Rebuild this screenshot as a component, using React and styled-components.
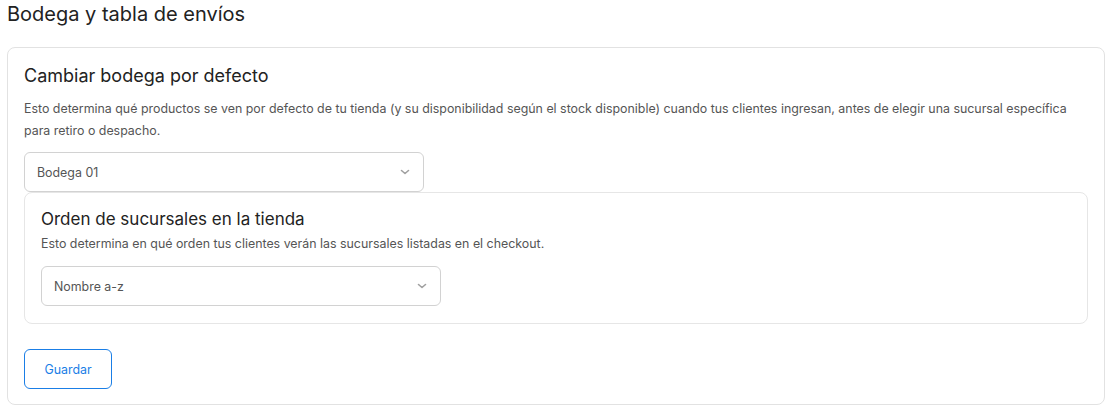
import React from 'react';
import styled, { createGlobalStyle } from 'styled-components';

const GlobalStyle = createGlobalStyle`
	body {
		margin: 0;
		background: #fff;
		font-family: Inter, "Noto Sans", sans-serif;
		color: #222;
	}
`;

const Page = styled.div`
		padding: 0 9px 0 7px;
	`,
	Title = styled.h1`
		margin: 0 0 19px;
		font-size: 20px;
		line-height: 28px;
		font-weight: 400;
		color: #222;
	`,
	Card = styled.section`
		border: 1px solid ${( p ) => p.borderColor || '#e2e2e2'};
		border-radius: 8px;
		padding: ${( p ) => p.padding || '16px'};
		background: #fff;
	`,
	Heading = styled.h2`
		margin: 0;
		font-size: ${( p ) => p.size || '18px'};
		line-height: 24px;
		font-weight: 400;
		color: #222;
	`,
	Description = styled.p`
		margin: ${( p ) => p.margin || '10px 0'};
		font-size: 12.4px;
		line-height: 22px;
		color: #555;
	`,
	SelectBox = styled.div`
		box-sizing: border-box;
		display: flex;
		align-items: center;
		justify-content: space-between;
		width: 400px;
		height: 40px;
		padding: 0 12px;
		border: 1px solid #d2d2d2;
		border-radius: 6px;
		font-size: 12.4px;
		color: #555;
		background: #fff;
	`,
	Button = styled.button`
		margin-top: 25px;
		width: 88px;
		height: 40px;
		border: 1px solid #1a7ee6;
		border-radius: 6px;
		background: #fff;
		color: #1a7ee6;
		font-family: inherit;
		font-size: 12.4px;
		cursor: pointer;
	`;

const Chevron = () => (
	<svg width='12' height='12' viewBox='0 0 12 12' fill='none'>
		<path d='M2.5 4.5 6 7.5 9.5 4.5' stroke='#a0a0a0' strokeWidth='1.6' strokeLinecap='round' strokeLinejoin='round' />
	</svg>
);

const Select = ( { value } ) => (
	<SelectBox>
		<span>{value}</span>
		<Chevron />
	</SelectBox>
);

const App = () => (
	<Page>
		<GlobalStyle />
		<Title>Bodega y tabla de envíos</Title>
		<Card padding='16px 16px 15px'>
			<Heading>Cambiar bodega por defecto</Heading>
			<Description>
				Esto determina qué productos se ven por defecto de tu tienda (y su disponibilidad según el stock disponible) cuando tus clientes ingresan, antes de elegir una sucursal específica para retiro o despacho.
			</Description>
			<Select value='Bodega 01' />
			{/* Nested branch order */}
			<Card padding='14px 16px 17px' borderColor='#e6e6e6'>
				<Heading size='17px'>Orden de sucursales en la tienda</Heading>
				<Description margin='2px 0 11px'>
					Esto determina en qué orden tus clientes verán las sucursales listadas en el checkout.
				</Description>
				<Select value='Nombre a-z' />
			</Card>
			<Button>Guardar</Button>
		</Card>
	</Page>
);

export default App;
